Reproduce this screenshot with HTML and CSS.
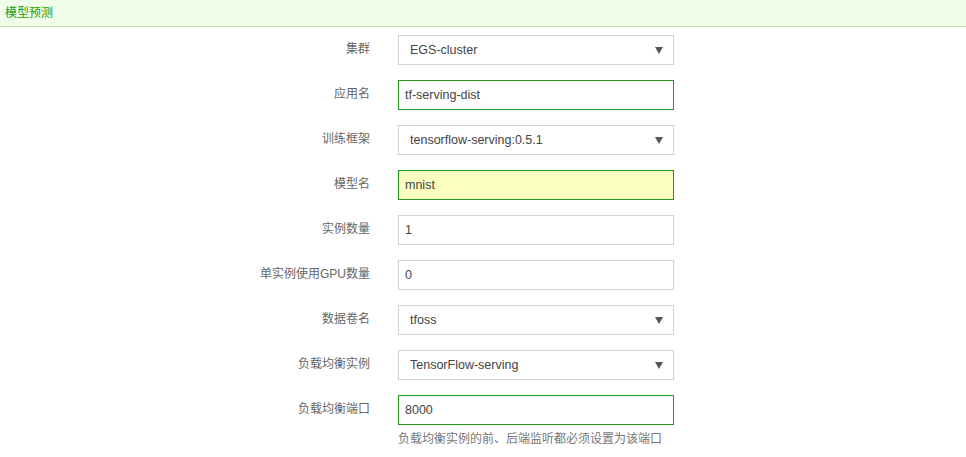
FILE: index.html
```html
<!DOCTYPE html>
<html lang="zh-CN">

<head>
  <meta charset="UTF-8">
  <meta name="viewport" content="width=device-width, initial-scale=1.0">
  <title>模型预测</title>
  <link rel="stylesheet" href="styles.css">
</head>

<body>
  <!-- Titre du panneau -->
  <div class="panel-head">模型预测</div>

  <form class="form-body">
    <div class="form-row">
      <label class="form-label">集群</label>
      <div class="select-wrap">
        <select class="form-control">
          <option>EGS-cluster</option>
        </select>
        <span class="caret"></span>
      </div>
    </div>

    <div class="form-row">
      <label class="form-label">应用名</label>
      <input class="form-control input active" type="text" value="tf-serving-dist">
    </div>

    <div class="form-row">
      <label class="form-label">训练框架</label>
      <div class="select-wrap">
        <select class="form-control">
          <option>tensorflow-serving:0.5.1</option>
        </select>
        <span class="caret"></span>
      </div>
    </div>

    <div class="form-row">
      <label class="form-label">模型名</label>
      <input class="form-control input active filled" type="text" value="mnist">
    </div>

    <div class="form-row">
      <label class="form-label">实例数量</label>
      <input class="form-control input" type="text" value="1">
    </div>

    <div class="form-row">
      <label class="form-label">单实例使用GPU数量</label>
      <input class="form-control input" type="text" value="0">
    </div>

    <div class="form-row">
      <label class="form-label">数据卷名</label>
      <div class="select-wrap">
        <select class="form-control">
          <option>tfoss</option>
        </select>
        <span class="caret"></span>
      </div>
    </div>

    <div class="form-row">
      <label class="form-label">负载均衡实例</label>
      <div class="select-wrap">
        <select class="form-control">
          <option>TensorFlow-serving</option>
        </select>
        <span class="caret"></span>
      </div>
    </div>

    <div class="form-row">
      <label class="form-label">负载均衡端口</label>
      <div>
        <input class="form-control input active" type="text" value="8000">
        <p class="help">负载均衡实例的前、后端监听都必须设置为该端口</p>
      </div>
    </div>
  </form>
</body>

</html>
```

FILE: styles.css
```css
body {
  margin: 0;
  font-family: "Liberation Sans", "Noto Sans CJK SC", sans-serif;
  font-size: 12px;
  color: #666;
  background-color: #fff;
}

.panel-head {
  height: 26px;
  line-height: 26px;
  padding-left: 5px;
  background-color: #f0fde8;
  border-bottom: 1px solid #c7e2b5;
  color: #2a9a05;
  font-size: 12px;
}

.form-body {
  padding-top: 8px;
}

.form-row {
  display: grid;
  grid-template-columns: 370px 276px;
  column-gap: 28px;
  margin-bottom: 15px;
}

.form-label {
  text-align: right;
  line-height: 28px;
  color: #666;
}

.form-control {
  box-sizing: border-box;
  width: 276px;
  height: 30px;
  margin: 0;
  border: 1px solid #d2d2d2;
  background-color: #fff;
  color: #444;
  font-family: "Liberation Sans", "Noto Sans CJK SC", sans-serif;
  font-size: 12.5px;
  outline: none;
}

select.form-control {
  appearance: none;
  -webkit-appearance: none;
  padding: 0 24px 0 11px;
  border-radius: 0;
}

.input {
  padding: 0 6px;
}

.input.active {
  border-color: #1e9a1e;
}

.input.filled {
  background-color: #fafebf;
}

.select-wrap {
  position: relative;
  width: 276px;
}

.caret {
  position: absolute;
  right: 11px;
  top: 12px;
  width: 0;
  height: 0;
  border-left: 4px solid transparent;
  border-right: 4px solid transparent;
  border-top: 7px solid #555;
  pointer-events: none;
}

.help {
  margin: 4px 0 0;
  color: #777;
  font-size: 12px;
  white-space: nowrap;
}
```
